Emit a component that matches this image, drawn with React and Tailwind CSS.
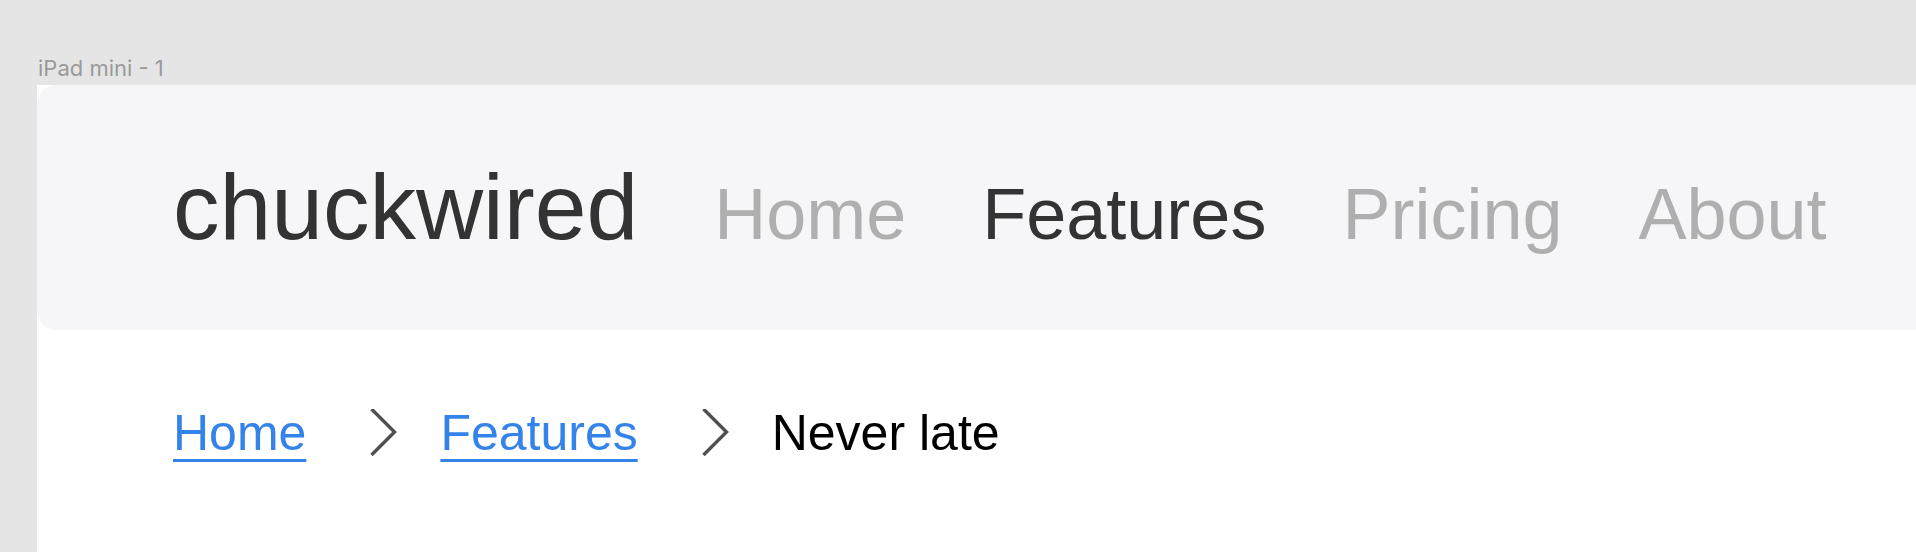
const navItems = [
  { label: 'Home', active: false },
  { label: 'Features', active: true },
  { label: 'Pricing', active: false },
  { label: 'About', active: false },
]

const crumbs = [
  { label: 'Home', href: '#' },
  { label: 'Features', href: '#' },
  { label: 'Never late' },
]

function Chevron() {
  return (
    <svg width="27" height="48" viewBox="0 0 27 48" fill="none" aria-hidden="true" className="shrink-0">
      <polyline points="1.5,0 24.5,23 1.5,46" stroke="#4f4f4f" strokeWidth="3.4" />
    </svg>
  )
}

export default function App() {
  return (
    <div className="flex h-[552px] w-full flex-col overflow-hidden bg-[#e5e5e5] font-['Liberation_Sans',Arial,sans-serif]">
      {/* Figma frame label */}
      <p className="ml-[38px] mt-[56px] h-[25px] font-['Inter',sans-serif] text-[22px] leading-[25px] text-[#9a9a9a]">
        iPad mini - 1
      </p>

      <div className="ml-[37px] mt-[4px] flex-1 bg-white">
        {/* top navigation */}
        <header className="flex h-[245px] items-center rounded-l-[20px] bg-[#f6f6f8] pl-[136px]">
          <div className="flex items-baseline">
            <span className="text-[93px] leading-none text-[#333333]">chuckwired</span>
            <nav className="ml-[76px] flex items-baseline gap-[76px]">
              {navItems.map((item) => (
                <a
                  key={item.label}
                  href="#"
                  className={`text-[72px] leading-none ${item.active ? 'text-[#333333]' : 'text-[#afafaf]'}`}
                >
                  {item.label}
                </a>
              ))}
            </nav>
          </div>
        </header>

        {/* breadcrumb */}
        <nav aria-label="Breadcrumb" className="mt-[78px] flex items-center pl-[136px] text-[50px] leading-none">
          {crumbs.map((c, i) => (
            <div key={c.label} className="flex items-center">
              {i > 0 && (
                <span className="ml-[64px] mr-[43px] flex">
                  <Chevron />
                </span>
              )}
              {c.href ? (
                <a
                  href={c.href}
                  className="text-[#3483eb] underline decoration-[3px] underline-offset-[9px]"
                >
                  {c.label}
                </a>
              ) : (
                <span className="text-black">{c.label}</span>
              )}
            </div>
          ))}
        </nav>
      </div>
    </div>
  )
}
